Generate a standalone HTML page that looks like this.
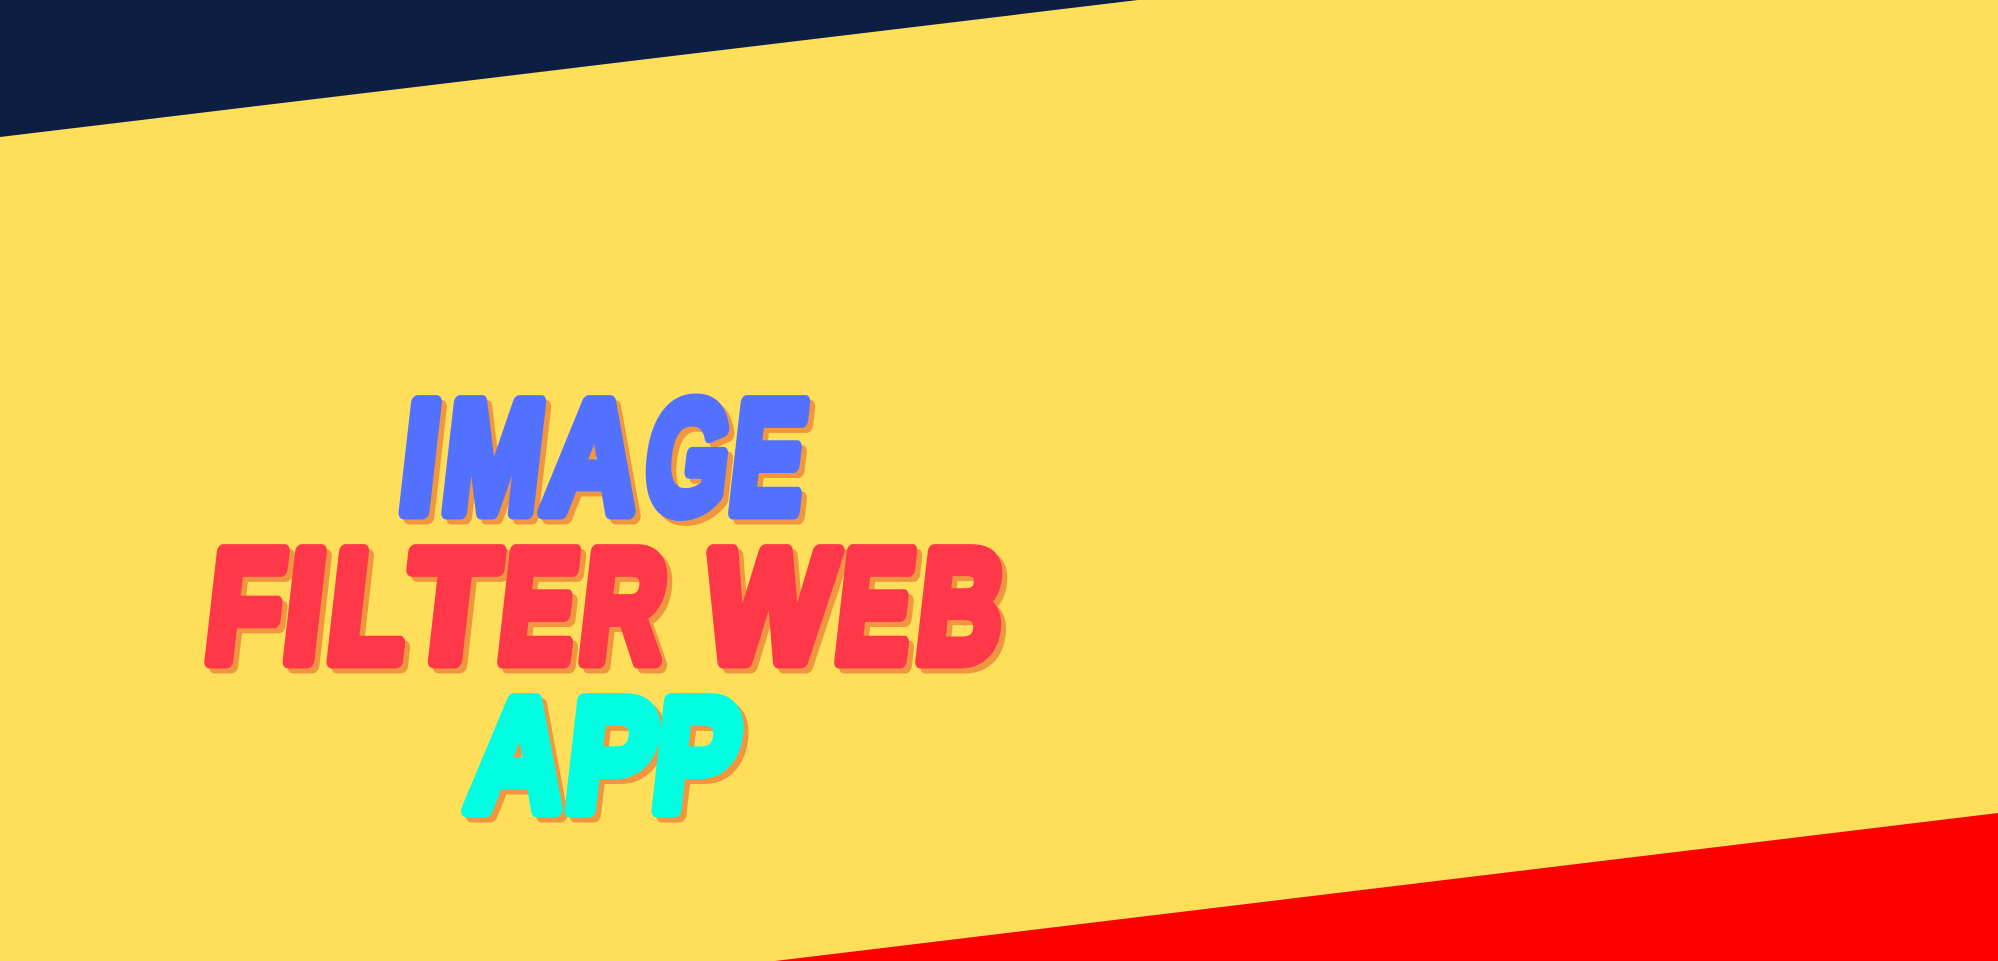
<!DOCTYPE html>
<html><head><meta charset="utf-8"><style>
html,body{margin:0;padding:0;width:1998px;height:961px;overflow:hidden;background:#FFDF5A}
svg{display:block}
text{font-family:"Liberation Sans Narrow","Liberation Sans",sans-serif;font-weight:bold;font-size:159px;stroke-width:15px;stroke-linejoin:round}
</style></head><body>
<svg width="1998" height="961" viewBox="0 0 1998 961" xmlns="http://www.w3.org/2000/svg">
<rect width="1998" height="961" fill="#FFDF5A"/>
<polygon points="0,0 1138,0 0,137" fill="#0C1F42"/>
<polygon points="775,961 1998,813 1998,961" fill="#FF0000"/>
<defs>
<g id="l1" transform="translate(0,512) skewX(-6.5)">
<text x="396" textLength="36" lengthAdjust="spacingAndGlyphs">I</text>
<text x="439" textLength="97" lengthAdjust="spacingAndGlyphs">M</text>
<text x="540" textLength="93" lengthAdjust="spacingAndGlyphs">A</text>
<text x="641" textLength="82" lengthAdjust="spacingAndGlyphs">G</text>
<text x="726" textLength="73" lengthAdjust="spacingAndGlyphs">E</text>
</g>
<g id="l2" transform="translate(0,661) skewX(-6.5)">
<text x="202" textLength="74" lengthAdjust="spacingAndGlyphs">F</text>
<text x="280" textLength="37" lengthAdjust="spacingAndGlyphs">I</text>
<text x="324" textLength="77" lengthAdjust="spacingAndGlyphs">L</text>
<text x="401" textLength="88" lengthAdjust="spacingAndGlyphs">T</text>
<text x="495" textLength="75" lengthAdjust="spacingAndGlyphs">E</text>
<text x="576" textLength="83" lengthAdjust="spacingAndGlyphs">R</text>
<text x="700" textLength="126" lengthAdjust="spacingAndGlyphs">W</text>
<text x="832" textLength="74" lengthAdjust="spacingAndGlyphs">E</text>
<text x="913" textLength="84" lengthAdjust="spacingAndGlyphs">B</text>
</g>
<g id="l3" transform="translate(0,810) skewX(-6.5)">
<text x="464" textLength="96" lengthAdjust="spacingAndGlyphs">A</text>
<text x="562" textLength="88" lengthAdjust="spacingAndGlyphs">P</text>
<text x="649" textLength="84" lengthAdjust="spacingAndGlyphs">P</text>
</g>
</defs>
<g transform="translate(5,5)" fill="#F0963F" stroke="#F0963F">
<use href="#l1"/><use href="#l2"/><use href="#l3"/>
</g>
<use href="#l1" fill="#5271FF" stroke="#5271FF"/>
<use href="#l2" fill="#FF3849" stroke="#FF3849"/>
<use href="#l3" fill="#00FFE1" stroke="#00FFE1"/>
</svg>
</body></html>
